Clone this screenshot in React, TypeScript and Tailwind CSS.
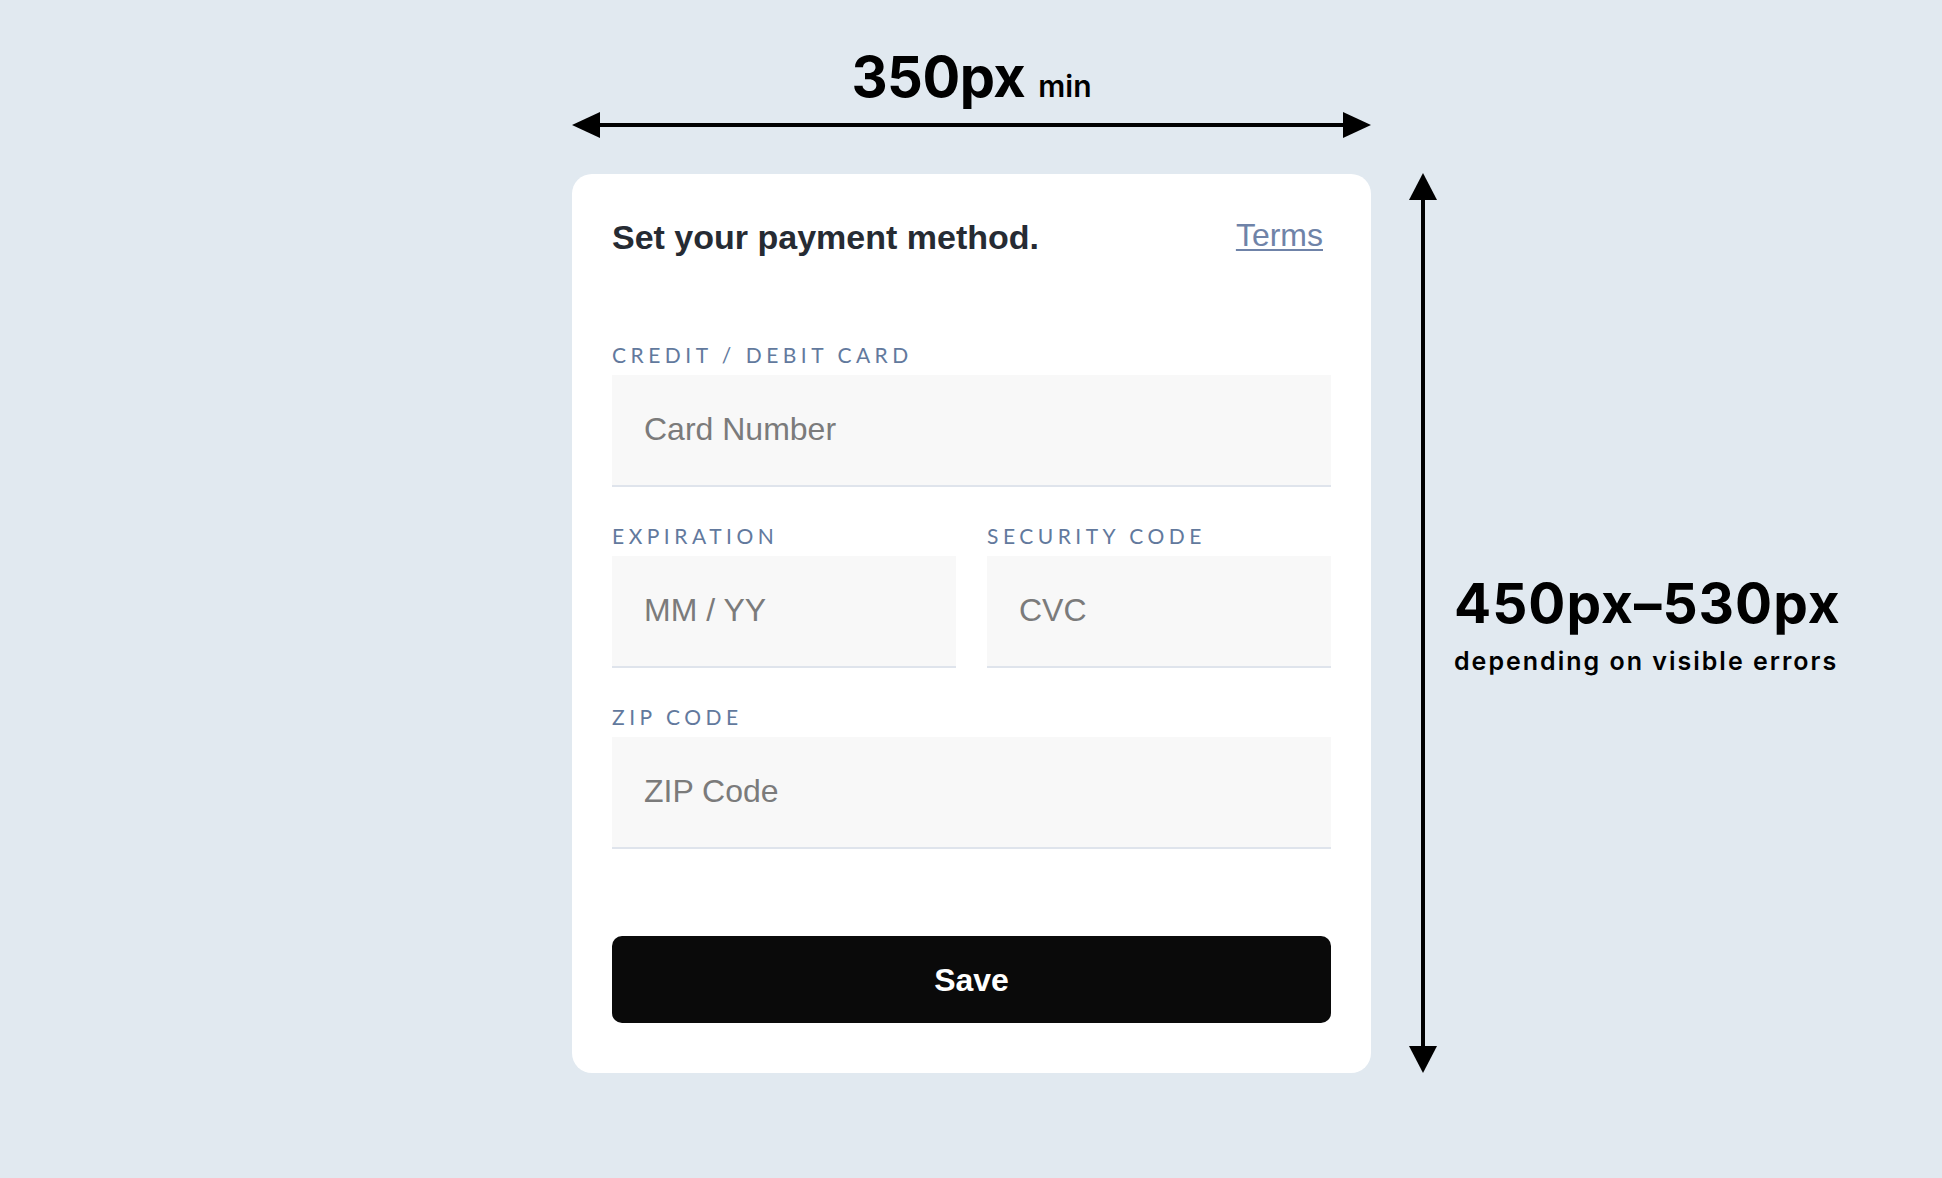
import React from "react";

function HArrow() {
  return (
    <svg width="799" height="28" viewBox="0 0 799 28" className="block">
      <line x1="20" y1="14" x2="779" y2="14" stroke="#000" strokeWidth="4" />
      <polygon points="0,14 28,1 28,27" fill="#000" />
      <polygon points="799,14 771,1 771,27" fill="#000" />
    </svg>
  );
}

function VArrow() {
  return (
    <svg width="28" height="900" viewBox="0 0 28 900" className="block">
      <line x1="14" y1="20" x2="14" y2="880" stroke="#000" strokeWidth="4" />
      <polygon points="14,0 0,27 28,27" fill="#000" />
      <polygon points="14,900 0,873 28,873" fill="#000" />
    </svg>
  );
}

function Field({ label, placeholder }: { label: string; placeholder: string }) {
  return (
    <div className="flex flex-col">
      <div className="text-[21px] leading-[21px] tracking-[4.5px] text-[#62799d] uppercase [font-family:Lato,sans-serif]">
        {label}
      </div>
      <div className="mt-[10px] h-[112px] bg-[#f8f8f8] border-b-2 border-[#dfe4ec] flex items-center pl-8 pb-[2px]">
        <span className="text-[32px] leading-[32px] text-[#7b7b7b] [font-family:'Liberation_Sans',Arial,sans-serif]">
          {placeholder}
        </span>
      </div>
    </div>
  );
}

export default function App() {
  return (
    <div className="w-full h-[1178px] bg-[#e1e9f0] overflow-hidden [font-family:'Liberation_Sans',Arial,sans-serif]">
      <div className="flex items-start pl-[572px]">
        <div className="w-[799px] flex flex-col">
          <div className="mt-[47px] h-[60px] flex items-baseline justify-center gap-[13px] text-black [font-family:Inter,sans-serif]">
            <span className="text-[56px] leading-[60px] font-bold tracking-[-0.5px]">350px</span>
            <span className="text-[30px] leading-[60px] font-semibold">min</span>
          </div>
          <div className="mt-[4px]">
            <HArrow />
          </div>
          <div className="mt-[35px] h-[899px] bg-white rounded-[20px] px-10 pt-[46px] flex flex-col">
            <div className="flex items-start justify-between">
              <div className="text-[34px] leading-[34px] font-bold text-[#262b33]">
                Set your payment method.
              </div>
              <a className="-mt-px mr-2 text-[32px] leading-[32px] text-[#6f83a8] underline underline-offset-[3px] decoration-2">
                Terms
              </a>
            </div>
            <div className="mt-[90px] flex flex-col gap-[38px]">
              <Field label="Credit / Debit Card" placeholder="Card Number" />
              <div className="grid grid-cols-2 gap-[31px]">
                <Field label="Expiration" placeholder="MM / YY" />
                <Field label="Security Code" placeholder="CVC" />
              </div>
              <Field label="Zip Code" placeholder="ZIP Code" />
            </div>
            <button className="mt-[87px] h-[87px] w-full rounded-[10px] bg-[#0a0a0a] text-white text-[32px] font-bold">
              Save
            </button>
          </div>
        </div>
        <div className="ml-[38px] pt-[173px] flex items-start">
          <VArrow />
          <div className="ml-[17px] mt-[402px] flex flex-col text-black [font-family:Inter,sans-serif]">
            <div className="text-[55px] leading-[56px] font-bold tracking-[1px] whitespace-nowrap">450px–530px</div>
            <div className="mt-[16px] text-[25px] leading-[28px] font-semibold tracking-[2px] whitespace-nowrap">
              depending on visible errors
            </div>
          </div>
        </div>
      </div>
    </div>
  );
}
